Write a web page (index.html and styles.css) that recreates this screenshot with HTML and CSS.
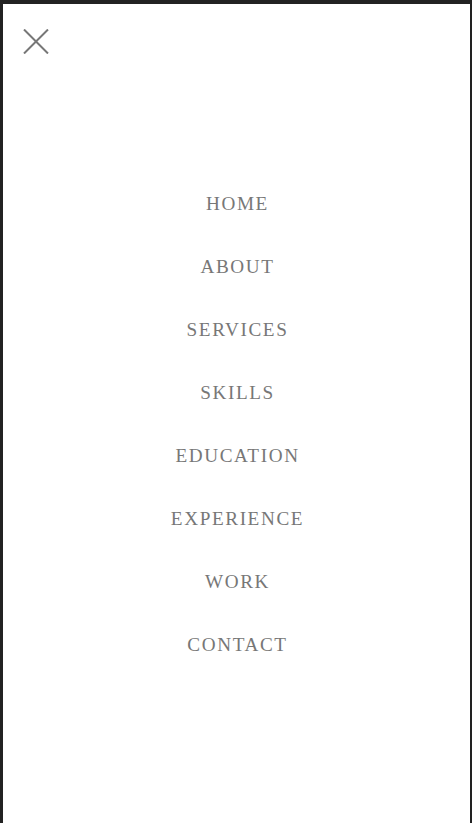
FILE: index.html
```html
<!DOCTYPE html>
<html lang="en">
<head>
    <meta charset="UTF-8">
    <meta name="viewport" content="width=device-width, initial-scale=1.0">
    <title>Menu</title>
    <link rel="stylesheet" href="styles.css">
</head>
<body>
    <div class="menu">
        <button class="close" aria-label="Close menu">
            <svg width="26" height="25" viewBox="0 0 26 25">
                <line x1="1" y1="0.5" x2="25" y2="24.5" />
                <line x1="25" y1="0.5" x2="1" y2="24.5" />
            </svg>
        </button>
        <nav class="nav">
            <ul>
                <li><a href="#home">Home</a></li>
                <li><a href="#about">About</a></li>
                <li><a href="#services">Services</a></li>
                <li><a href="#skills">Skills</a></li>
                <li><a href="#education">Education</a></li>
                <li><a href="#experience">Experience</a></li>
                <li><a href="#work">Work</a></li>
                <li><a href="#contact">Contact</a></li>
            </ul>
        </nav>
    </div>
</body>
</html>
```

FILE: styles.css
```css
html, body {
    height: 100%;
}

body {
    margin: 0;
    padding: 4px 2px 0 3px;
    box-sizing: border-box;
    background: #222222;
    font-family: "Liberation Serif", "Times New Roman", serif;
}

.menu {
    background: #ffffff;
    height: 100%;
    overflow: hidden;
}

.close {
    display: block;
    margin: 25px 0 0 20px;
    padding: 0;
    border: none;
    background: none;
    cursor: pointer;
}

.close svg {
    display: block;
    stroke: #777777;
    stroke-width: 2;
}

.nav {
    margin-top: 118px;
}

.nav ul {
    list-style: none;
    margin: 0;
    padding: 0 0 0 2px;
    text-align: center;
}

.nav li {
    height: 63px;
    line-height: 63px;
    font-size: 19.2px;
}

.nav a {
    letter-spacing: 1.6px;
    text-transform: uppercase;
    color: #777777;
    text-decoration: none;
}
```
